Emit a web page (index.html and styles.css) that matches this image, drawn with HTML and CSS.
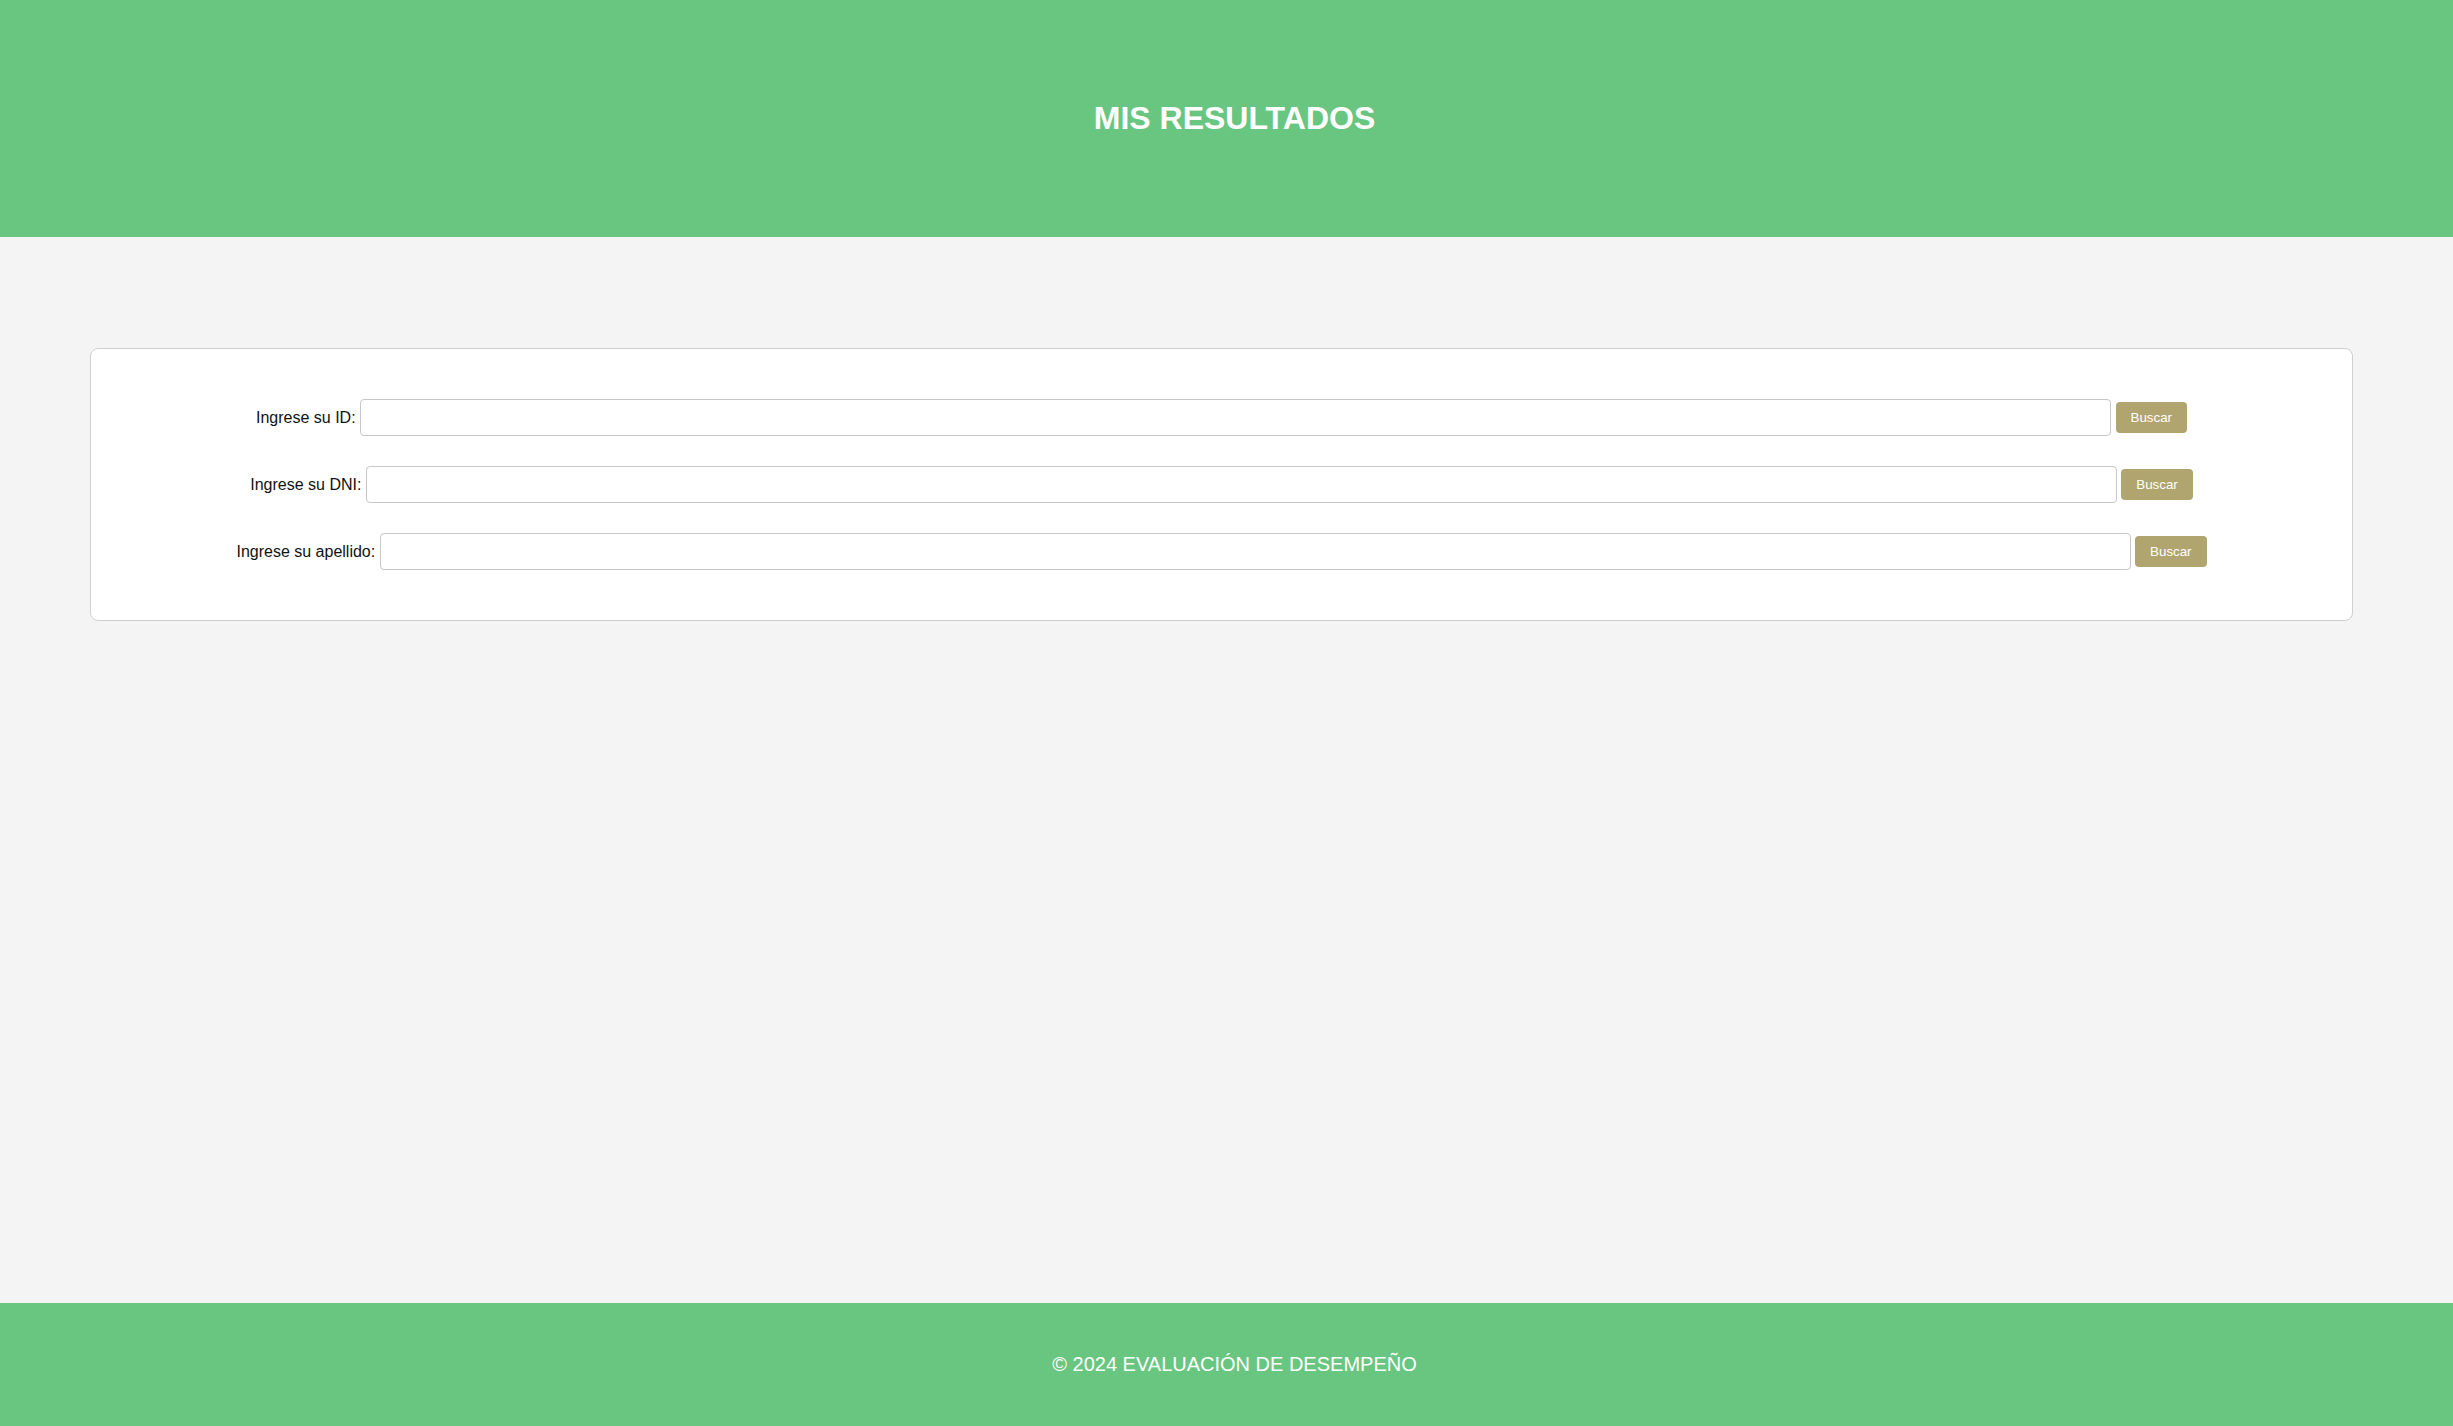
FILE: index.html
```html
<!DOCTYPE html>
<html lang="es">
<head>
<meta charset="utf-8">
<title>Mis Resultados</title>
<link rel="stylesheet" href="styles.css">
</head>
<body>
<header class="site-header">
  <h1 class="site-title">MIS RESULTADOS</h1>
</header>
<main class="main">
  <section class="card">
    <form class="search-row">
      <label class="search-label" for="f-id">Ingrese su ID:</label>
      <input class="search-input" id="f-id" type="text">
      <button class="search-btn" type="button">Buscar</button>
    </form>
    <form class="search-row">
      <label class="search-label" for="f-dni">Ingrese su DNI:</label>
      <input class="search-input" id="f-dni" type="text">
      <button class="search-btn" type="button">Buscar</button>
    </form>
    <form class="search-row">
      <label class="search-label" for="f-ape">Ingrese su apellido:</label>
      <input class="search-input" id="f-ape" type="text">
      <button class="search-btn" type="button">Buscar</button>
    </form>
  </section>
</main>
<footer class="site-footer">
  <p class="footer-text">© 2024 EVALUACIÓN DE DESEMPEÑO</p>
</footer>
</body>
</html>
```

FILE: styles.css
```css
html, body {
  margin: 0;
  padding: 0;
}

body {
  min-height: 100vh;
  display: flex;
  flex-direction: column;
  background: #f4f4f4;
  font-family: "Liberation Sans", Arial, sans-serif;
  color: #000;
}

.site-header {
  background: #69c680;
  padding: 100px 0 100px 16px;
  text-align: center;
}

.site-title {
  margin: 0;
  font-size: 32px;
  font-weight: bold;
  color: #fff;
  line-height: normal;
}

.main {
  flex: 1;
  padding: 111px 100px 0 90px;
}

.card {
  background: #fff;
  border: 1px solid #cfcfcf;
  border-radius: 8px;
  padding: 50px 0;
  display: flex;
  flex-direction: column;
  gap: 30px;
}

.search-row {
  margin: 0;
  display: flex;
  justify-content: center;
  align-items: center;
  gap: 4.45px;
}

.search-label {
  font-size: 16px;
  line-height: normal;
  color: #111;
}

.search-input {
  box-sizing: border-box;
  width: 1751px;
  height: 37px;
  border: 1px solid #c9c5c9;
  border-radius: 4px;
  padding: 8px;
  font-family: "Liberation Sans", Arial, sans-serif;
  font-size: 16px;
  background: #fff;
  margin: 0;
}

.search-btn {
  background: #b0a56f;
  color: #fff;
  border: none;
  border-radius: 4px;
  padding: 8px 15px;
  font-family: "Liberation Sans", Arial, sans-serif;
  font-size: 13.333px;
  line-height: normal;
  margin: 0;
  cursor: pointer;
}

.site-footer {
  background: #69c680;
  padding: 50px 0 50px 16px;
  text-align: center;
}

.footer-text {
  margin: 0;
  font-size: 20px;
  line-height: normal;
  color: #fff;
}
```
